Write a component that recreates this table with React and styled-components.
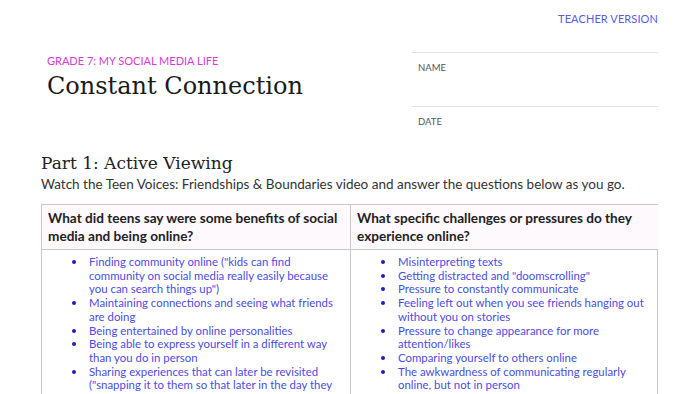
import React from 'react';
import styled, { createGlobalStyle } from 'styled-components';

const GlobalStyle = createGlobalStyle`
	body {
		margin: 0;
		background: #fff;
		font-family: Lato, "Liberation Sans", sans-serif;
	}
`;

const Page = styled.div`
	width: 700px;
	height: 394px;
	overflow: hidden;
	padding: 0 42px 0 41px;
	box-sizing: border-box;
`;

const TopBar = styled.div`
	display: flex;
	justify-content: flex-end;
	padding-top: 12px;
	height: 40px;
	box-sizing: border-box;
`;

const Version = styled.div`
	font-size: 11px;
	color: #5b5be0;
	letter-spacing: 0.1px;
`;

const Header = styled.div`
	display: flex;
	justify-content: space-between;
`;

const TitleBlock = styled.div`
	padding: 14px 0 0 6px;
`;

const Grade = styled.div`
	font-size: 11px;
	color: #d63bd6;
	line-height: 14px;
`;

const Title = styled.h1`
	margin: 0;
	font-family: "DejaVu Serif", serif;
	font-weight: normal;
	font-size: 24px;
	line-height: 37px;
	color: #1a1a1a;
`;

const Fields = styled.div`
	width: 246px;
	padding-top: 12px;
`;

const Field = styled.div`
	border-top: 1px solid #e2e2e2;
	height: ${(p) => p.$h}px;
	padding: 9px 0 0 6px;
	box-sizing: border-box;
	font-size: 9.5px;
	color: #555;
`;

const PartTitle = styled.h2`
	margin: 0;
	font-family: "DejaVu Serif", serif;
	font-weight: normal;
	font-size: 17px;
	line-height: 22px;
	color: #222;
`;

const Intro = styled.p`
	margin: 0;
	font-size: 13.5px;
	line-height: 20px;
	color: #333;
`;

const Table = styled.div`
	margin-top: 10px;
	display: grid;
	grid-template-columns: 308px 308px;
	border: 1px solid #c9c9c9;
`;

const HeadCell = styled.div`
	background: #fdf9fd;
	padding: 4px 6px 4px 6px;
	font-size: 13.6px;
	font-weight: bold;
	line-height: 18px;
	color: #222;
	border-bottom: 1px solid #c9c9c9;
	border-left: ${(p) => (p.$divider ? '1px solid #c9c9c9' : 'none')};
`;

const BodyCell = styled.div`
	padding: 5px 6px 0 0;
	border-left: ${(p) => (p.$divider ? '1px solid #c9c9c9' : 'none')};
`;

const List = styled.ul`
	margin: 0;
	padding-left: 47px;
	list-style: none;
`;

const Item = styled.li`
	position: relative;
	font-size: 11.4px;
	line-height: 13.7px;
	color: #4c4ce4;

	&::before {
		content: '';
		position: absolute;
		left: -17px;
		top: 5px;
		width: 4px;
		height: 4px;
		border-radius: 50%;
		background: #1f1fb8;
	}
`;

const benefits = [
	'Finding community online ("kids can find community on social media really easily because you can search things up")',
	'Maintaining connections and seeing what friends are doing',
	'Being entertained by online personalities',
	'Being able to express yourself in a different way than you do in person',
	'Sharing experiences that can later be revisited ("snapping it to them so that later in the day they can look back on it")',
];

const challenges = [
	'Misinterpreting texts',
	'Getting distracted and "doomscrolling"',
	'Pressure to constantly communicate',
	'Feeling left out when you see friends hanging out without you on stories',
	'Pressure to change appearance for more attention/likes',
	'Comparing yourself to others online',
	'The awkwardness of communicating regularly online, but not in person',
];

const App = () => {
	return (
		<Page>
			<GlobalStyle />
			<TopBar>
				<Version>TEACHER VERSION</Version>
			</TopBar>
			<Header>
				<TitleBlock>
					<Grade>GRADE 7: MY SOCIAL MEDIA LIFE</Grade>
					<Title>Constant Connection</Title>
				</TitleBlock>
				<Fields>
					<Field $h={54}>NAME</Field>
					<Field $h={46}>DATE</Field>
				</Fields>
			</Header>
			<PartTitle>Part 1: Active Viewing</PartTitle>
			<Intro>
				Watch the Teen Voices: Friendships &amp; Boundaries video and answer the questions below as you go.
			</Intro>
			<Table>
				<HeadCell>What did teens say were some benefits of social media and being online?</HeadCell>
				<HeadCell $divider>What specific challenges or pressures do they experience online?</HeadCell>
				<BodyCell>
					<List>
						{benefits.map((b) => (
							<Item key={b}>{b}</Item>
						))}
					</List>
				</BodyCell>
				<BodyCell $divider>
					<List>
						{challenges.map((c) => (
							<Item key={c}>{c}</Item>
						))}
					</List>
				</BodyCell>
			</Table>
		</Page>
	);
};

export default App;
